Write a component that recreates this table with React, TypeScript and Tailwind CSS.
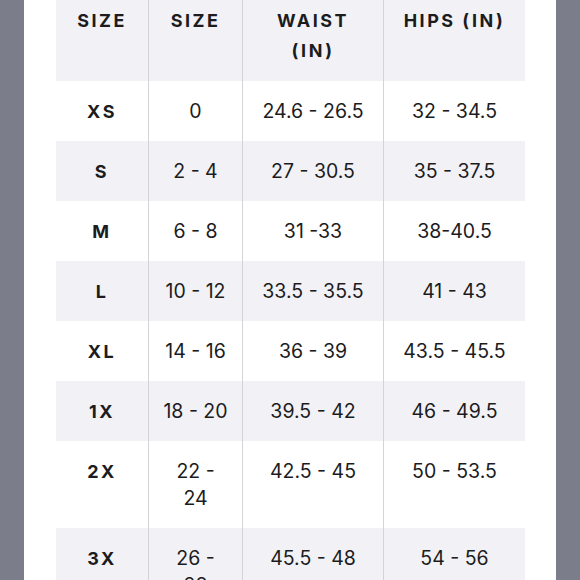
import React from 'react'

type Row = { size: string; num: string[]; waist: string; hips: string }

const rows: Row[] = [
    { size: 'XS', num: ['0'], waist: '24.6 - 26.5', hips: '32 - 34.5' },
    { size: 'S', num: ['2 - 4'], waist: '27 - 30.5', hips: '35 - 37.5' },
    { size: 'M', num: ['6 - 8'], waist: '31 -33', hips: '38-40.5' },
    { size: 'L', num: ['10 - 12'], waist: '33.5 - 35.5', hips: '41 - 43' },
    { size: 'XL', num: ['14 - 16'], waist: '36 - 39', hips: '43.5 - 45.5' },
    { size: '1X', num: ['18 - 20'], waist: '39.5 - 42', hips: '46 - 49.5' },
    { size: '2X', num: ['22 -', '24'], waist: '42.5 - 45', hips: '50 - 53.5' },
    { size: '3X', num: ['26 -', '28'], waist: '45.5 - 48', hips: '54 - 56' },
]

const grid = 'grid grid-cols-[92px_94px_141px_142px]'
const divider = 'border-l border-[#d3d3d8]'

export default function App() {
    return (
        <div
            className="flex h-[580px] w-[580px] overflow-hidden bg-white text-[#1c1c1e]"
            style={{ fontFamily: 'Inter, "Liberation Sans", sans-serif' }}
        >
            <div className="w-[24px] shrink-0 bg-[#7c7d8a]" />

            <div className="flex-1 pl-[32px] pr-[31px]">
                {/* header */}
                <div className={`${grid} h-[81px] bg-[#f2f2f6] text-[18px] font-bold tracking-[2.5px] leading-[30px]`}>
                    <div className="pt-[6px] text-center">SIZE</div>
                    <div className={`${divider} pt-[6px] text-center`}>SIZE</div>
                    <div className={`${divider} pt-[6px] text-center`}>
                        WAIST
                        <br />
                        (IN)
                    </div>
                    <div className={`${divider} pt-[6px] text-center`}>HIPS (IN)</div>
                </div>

                {rows.map((r, i) => (
                    <div
                        key={r.size}
                        className={`${grid} text-[19.5px] leading-[27px] ${i % 2 === 0 ? 'bg-white' : 'bg-[#f2f2f6]'}`}
                    >
                        <div className="py-[16.5px] text-center text-[18px] font-bold tracking-[2.5px]">{r.size}</div>
                        <div className={`${divider} whitespace-nowrap py-[16.5px] text-center`}>
                            {r.num.map((n, j) => (
                                <div key={j}>{n}</div>
                            ))}
                        </div>
                        <div className={`${divider} whitespace-nowrap py-[16.5px] text-center`}>{r.waist}</div>
                        <div className={`${divider} whitespace-nowrap py-[16.5px] text-center`}>{r.hips}</div>
                    </div>
                ))}
            </div>

            <div className="w-[24px] shrink-0 bg-[#7c7d8a]" />
        </div>
    )
}
